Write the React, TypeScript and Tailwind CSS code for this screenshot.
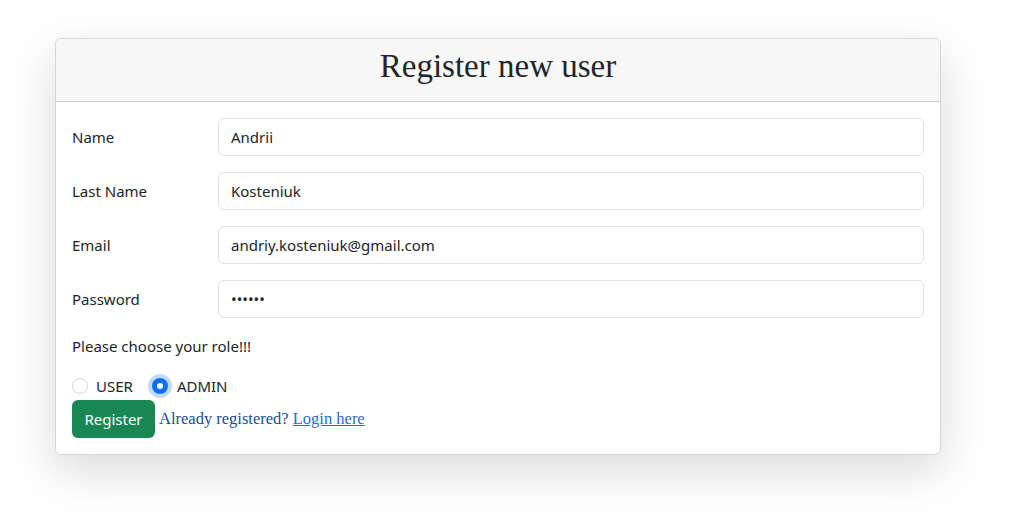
export default function App() {
  const fields = [
    { label: "Name", value: "Andrii", type: "text" },
    { label: "Last Name", value: "Kosteniuk", type: "text" },
    { label: "Email", value: "andriy.kosteniuk@gmail.com", type: "email" },
    { label: "Password", value: "123456", type: "password" },
  ];

  return (
    <div className="min-h-screen bg-white pt-[38px] font-['Noto_Sans',sans-serif] text-[15px] text-[#212529]">
      <div className="ml-[55px] w-[886px] overflow-hidden rounded-md border border-[#d6d6d6] bg-white shadow-[0_16px_48px_rgba(0,0,0,0.15)]">
        {/* Header */}
        <div className="flex h-[63px] items-center justify-center border-b border-[#cfcfcf] bg-[#f7f7f7] pb-[7px]">
          <h1 className="font-['Liberation_Serif',serif] text-[33px] leading-none text-[#212529]">
            Register new user
          </h1>
        </div>

        {/* Body */}
        <div className="px-4 pb-4 pt-4">
          <div className="flex flex-col gap-4">
            {fields.map((f) => (
              <div key={f.label} className="grid grid-cols-[146px_1fr] items-center">
                <label className="leading-6">{f.label}</label>
                <input
                  type={f.type}
                  defaultValue={f.value}
                  className="h-[38px] w-full rounded-md border border-[#dee2e6] bg-white px-3 text-[15px] text-[#212529] outline-none"
                />
              </div>
            ))}
          </div>

          <p className="mt-4 leading-6">Please choose your role!!!</p>

          <div className="mt-4 flex items-center leading-6">
            <label className="flex items-center">
              <span className="h-4 w-4 rounded-full border border-[#d5d8dc] bg-white" />
              <span className="ml-2">USER</span>
            </label>
            <label className="ml-[19px] flex items-center">
              <span className="flex h-4 w-4 items-center justify-center rounded-full bg-[#0d6efd] shadow-[0_0_0_4px_rgba(13,110,253,0.25)]">
                <span className="h-[6px] w-[6px] rounded-full bg-white" />
              </span>
              <span className="ml-[9px]">ADMIN</span>
            </label>
          </div>

          <div className="mt-[2px] flex items-center">
            <button className="h-[38px] w-[83px] rounded-md bg-[#198754] text-[15px] text-white">
              Register
            </button>
            <span className="ml-1 font-['Liberation_Serif',serif] text-[16.5px] text-[#1a4c99]">
              Already registered?{" "}
              <a href="#" className="text-[#2a6bd0] underline">
                Login here
              </a>
            </span>
          </div>
        </div>
      </div>
    </div>
  );
}
